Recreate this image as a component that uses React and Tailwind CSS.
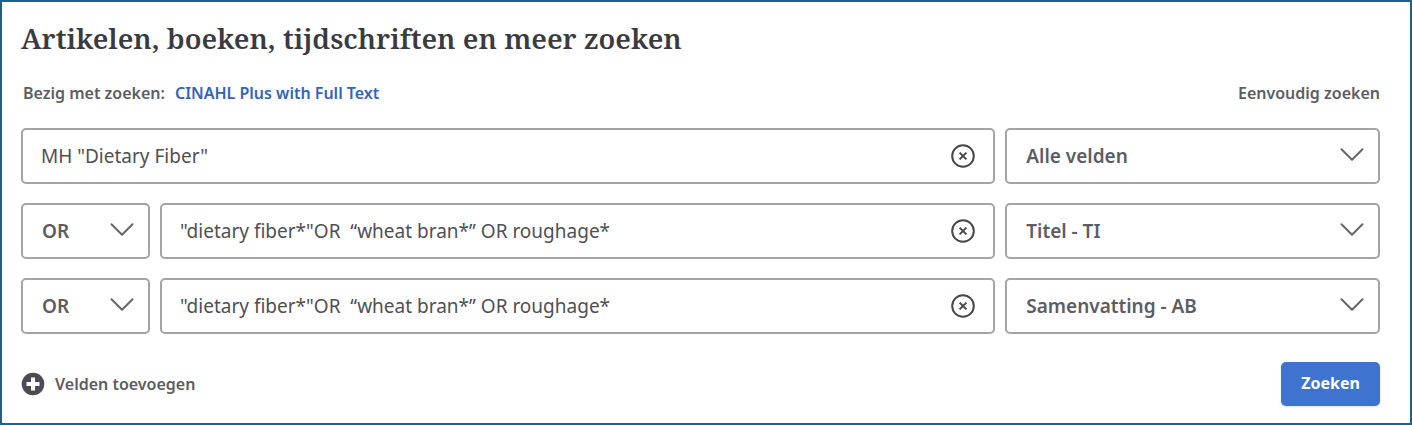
import React, { useState } from 'react'

const FIELDS = ['Alle velden', 'Titel - TI', 'Samenvatting - AB', 'Auteur - AU']
const OPERATORS = ['AND', 'OR', 'NOT']

const INITIAL_ROWS = [
  { id: 1, operator: null, term: 'MH "Dietary Fiber"', field: 'Alle velden' },
  { id: 2, operator: 'OR', term: '"dietary fiber*"OR  “wheat bran*” OR roughage*', field: 'Titel - TI' },
  { id: 3, operator: 'OR', term: '"dietary fiber*"OR  “wheat bran*” OR roughage*', field: 'Samenvatting - AB' },
]

const Dropdown = ({ label, value, options, onChange }) => (
  <div className="relative h-full w-full">
    <select
      aria-label={label}
      value={value}
      onChange={e => onChange(e.target.value)}
      className="h-full w-full appearance-none rounded-[5px] border-2 border-[#a3a4a9] bg-white pl-[19px] pr-12 text-[19px] font-semibold text-[#5c5d63]"
    >
      {options.map(o => <option key={o}>{o}</option>)}
    </select>
    <svg
      viewBox="0 0 24 14"
      className="pointer-events-none absolute right-4 top-5 h-3.5 w-6"
      fill="none"
      stroke="#66676c"
      strokeWidth="2"
      strokeLinecap="round"
      strokeLinejoin="round"
    >
      <path d="M1.5 1.2 12 11.8 22.5 1.2" />
    </svg>
  </div>
)

const SearchRow = ({ row, onChange }) => (
  <div className="grid h-14 grid-cols-[13fr_5fr] gap-2.5">
    <div className="flex min-w-0 gap-2.5">
      {row.operator && (
        <div className="w-[129px] shrink-0">
          <Dropdown
            label="Operator"
            value={row.operator}
            options={OPERATORS}
            onChange={operator => onChange({ ...row, operator })}
          />
        </div>
      )}
      <div className="flex min-w-0 flex-1 items-center rounded-[5px] border-2 border-[#a3a4a9] px-[18px]">
        <input
          type="text"
          aria-label="Zoekterm"
          value={row.term}
          onChange={e => onChange({ ...row, term: e.target.value })}
          className="min-w-0 flex-1 text-[19px] text-[#4f5055] outline-none"
        />
        <button type="button" aria-label="Wissen" onClick={() => onChange({ ...row, term: '' })}>
          <svg viewBox="0 0 24 24" className="size-6" fill="none" stroke="#47484d">
            <circle cx="12" cy="12" r="10.8" strokeWidth="2" />
            <path d="m8.6 8.6 6.8 6.8m0-6.8-6.8 6.8" strokeWidth="2" />
          </svg>
        </button>
      </div>
    </div>
    <Dropdown
      label="Veld"
      value={row.field}
      options={FIELDS}
      onChange={field => onChange({ ...row, field })}
    />
  </div>
)

const App = () => {
  const [rows, setRows] = useState(INITIAL_ROWS)

  const updateRow = next => setRows(rows.map(r => (r.id === next.id ? next : r)))
  const addRow = () => setRows([...rows, { id: rows.length + 1, operator: 'AND', term: '', field: 'Alle velden' }])

  return (
    <main className="border-2 border-[#1d6286] bg-white pb-[17px] pl-[19px] pr-[30px] pt-4 font-['Noto_Sans',sans-serif]">
      <h1 className="font-['Noto_Serif','DejaVu_Serif',serif] text-[28px] leading-10 font-semibold text-[#3a3b40]">
        Artikelen, boeken, tijdschriften en meer zoeken
      </h1>

      <div className="mt-[23px] flex items-center justify-between text-base font-semibold text-[#5c5d63]">
        <p className="flex gap-2.5 pl-0.5">
          Bezig met zoeken:
          <a href="#databases" className="text-[#3263bd]">CINAHL Plus with Full Text</a>
        </p>
        <a href="#basic">Eenvoudig zoeken</a>
      </div>

      <form onSubmit={e => e.preventDefault()}>
        <div className="mt-[23px] flex flex-col gap-[19px]">
          {rows.map(row => <SearchRow key={row.id} row={row} onChange={updateRow} />)}
        </div>

        <div className="mt-7 flex items-center justify-between">
          <button type="button" onClick={addRow} className="flex items-center gap-2.5 text-base font-semibold text-[#5c5d63]">
            <svg viewBox="0 0 24 24" className="size-6">
              <circle cx="12" cy="12" r="11.3" fill="#4b4c52" />
              <path d="M12 5.5v13M5.5 12h13" stroke="#fff" strokeWidth="4" />
            </svg>
            Velden toevoegen
          </button>
          <button type="submit" className="h-11 rounded-[5px] bg-[#3e74d0] px-5 pb-0.5 text-base font-bold text-white shadow-sm">
            Zoeken
          </button>
        </div>
      </form>
    </main>
  )
}

export default App
